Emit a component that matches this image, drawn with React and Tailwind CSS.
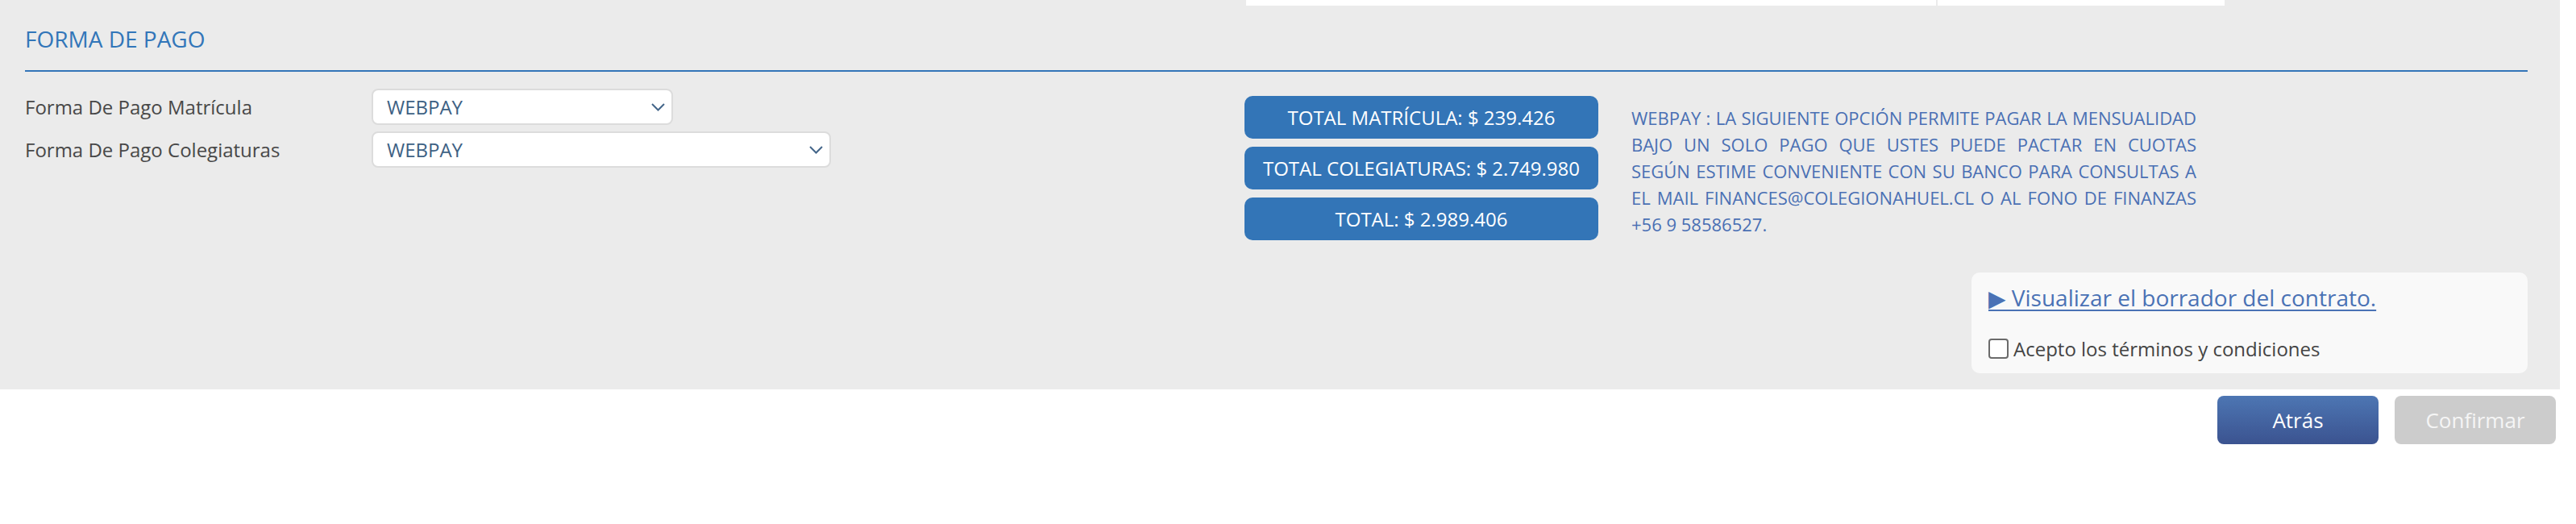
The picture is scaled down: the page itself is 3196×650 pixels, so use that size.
import React from "react";

function FakeSelect({ width, value }) {
  return (
    <div
      className={`${width} h-[45px] flex items-center justify-between pl-[17px] pr-[8px] bg-white border-2 border-[#dcdcdc] rounded-[8px]`}
    >
      <span className="text-[24px] text-[#3d6184]">{value}</span>
      <svg width="17" height="10" viewBox="0 0 17 10" fill="none">
        <path d="M1 1 L8.5 8.5 L16 1" stroke="#44668a" strokeWidth="2" />
      </svg>
    </div>
  );
}

function TotalBox({ children }) {
  return (
    <div className="h-[53px] w-[439px] flex items-center justify-center rounded-[10px] bg-[#3375b7] text-white text-[24px]">
      {children}
    </div>
  );
}

export default function App() {
  return (
    <div className="w-[3196px] bg-white font-['Open_Sans','DejaVu_Sans',sans-serif]">
      {/* zona gris */}
      <div className="w-[3176px] bg-[#ebebeb] pb-[20px]">
        {/* restos de la tabla de arriba */}
        <div className="flex pl-[1546px] gap-[2px]">
          <div className="w-[856px] h-[7px] bg-white"></div>
          <div className="w-[356px] h-[7px] bg-white"></div>
        </div>

        <div className="pl-[31px] pr-[40px]">
          {/* TITULO */}
          <h2 className="mt-[22px] pb-[20px] border-b-2 border-[#3375b8] text-[28px] leading-[38px] text-[#3276b9]">
            FORMA DE PAGO
          </h2>

          <div className="flex items-start">
            {/* SELECTS */}
            <div className="w-[1513px] pt-[21px] flex flex-col gap-[8px]">
              <div className="flex items-center">
                <span className="w-[430px] text-[24px] text-[#484848]">Forma De Pago Matrícula</span>
                <FakeSelect width="w-[374px]" value="WEBPAY" />
              </div>
              <div className="flex items-center">
                <span className="w-[430px] text-[24px] text-[#484848]">Forma De Pago Colegiaturas</span>
                <FakeSelect width="w-[570px]" value="WEBPAY" />
              </div>
            </div>

            {/* TOTALES */}
            <div className="pt-[30px] flex items-start gap-[41px]">
              <div className="flex flex-col gap-[10px]">
                <TotalBox>TOTAL MATRÍCULA: $ 239.426</TotalBox>
                <TotalBox>TOTAL COLEGIATURAS: $ 2.749.980</TotalBox>
                <TotalBox>TOTAL: $ 2.989.406</TotalBox>
              </div>
              <p className="mt-[11px] w-[701px] text-justify text-[22px] leading-[33px] text-[#4a70b4]">
                WEBPAY : LA SIGUIENTE OPCIÓN PERMITE PAGAR LA MENSUALIDAD BAJO UN SOLO PAGO QUE USTES PUEDE
                PACTAR EN CUOTAS SEGÚN ESTIME CONVENIENTE CON SU BANCO PARA CONSULTAS A EL MAIL
                FINANCES@COLEGIONAHUEL.CL O AL FONO DE FINANZAS +56 9 58586527.
              </p>
            </div>
          </div>

          {/* CONTRATO */}
          <div className="flex justify-end mt-[40px]">
            <div className="w-[690px] bg-[#f9f9f9] rounded-[10px] pl-[21px] pt-[12px] pb-[14px]">
              <a className="text-[28px] leading-[38px] text-[#4a72b5] underline decoration-2 underline-offset-[4px] cursor-pointer">
                ▶ Visualizar el borrador del contrato.
              </a>
              <label className="mt-[28px] flex items-center gap-[6px] text-[24px] leading-[33px] text-[#444]">
                <span className="w-[25px] h-[25px] bg-white border-2 border-[#6b6b6b] rounded-[4px]"></span>
                <span>Acepto los términos y condiciones</span>
              </label>
            </div>
          </div>
        </div>
      </div>

      {/* BOTONES */}
      <div className="flex justify-end gap-[20px] pr-[25px] mt-[8px]">
        <button className="w-[200px] h-[60px] rounded-[8px] bg-linear-to-b from-[#4d76b3] to-[#3b5390] text-white text-[26px]">
          Atrás
        </button>
        <button className="w-[200px] h-[60px] rounded-[8px] bg-[#cccccc] text-[#f5f5f5] text-[26px]">
          Confirmar
        </button>
      </div>
    </div>
  );
}
